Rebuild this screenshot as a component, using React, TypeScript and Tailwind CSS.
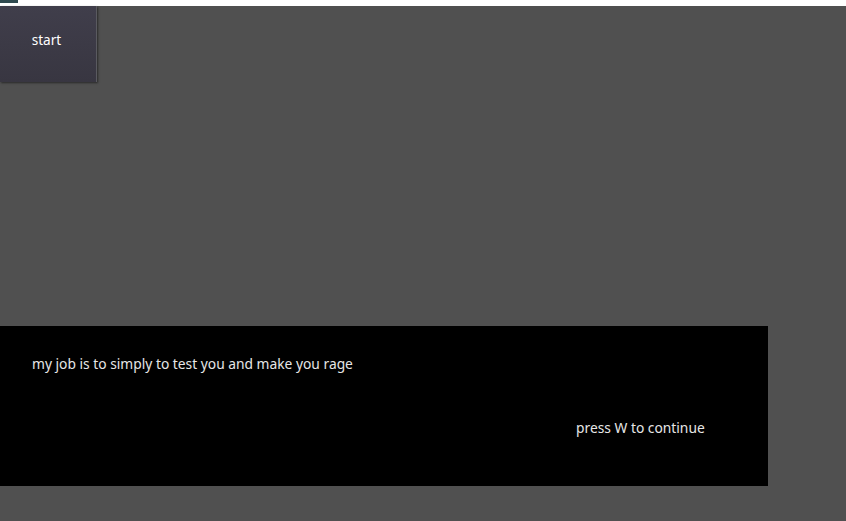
import React from "react";

export default function App() {
  return (
    <div className="w-[846px] h-[521px] bg-[#505050] flex flex-col overflow-hidden" style={{ fontFamily: '"Noto Sans", "Open Sans", sans-serif' }}>
      <div className="h-[6px] bg-white flex shrink-0">
        <div className="w-[18px] h-[3px] bg-[#2f4a4f]" />
      </div>
      <div className="flex">
        <div className="w-[97px] h-[76px] bg-gradient-to-b from-[#403e4b] to-[#383641] border-r border-r-[#5a5a60] shadow-[1px_1px_2px_rgba(0,0,0,0.5)] flex items-center justify-center text-[13.6px] text-white">
          <span className="-mt-[7px] -ml-[3px]">start</span>
        </div>
      </div>
      <div className="h-[244px]" />
      <div className="w-[768px] h-[160px] bg-black text-[#e6e6e6] text-[13.8px] relative flex flex-col">
        <div className="pl-[32px] pt-[28px] leading-[20px]">my job is to simply to test you and make you rage</div>
        <div className="pl-[576px] pt-[44px] leading-[20px]">press W to continue</div>
      </div>
    </div>
  );
}
